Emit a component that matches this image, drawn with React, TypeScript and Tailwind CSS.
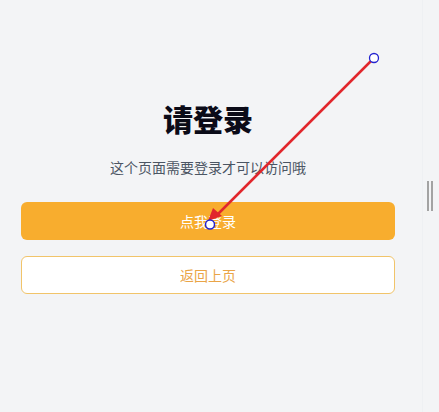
import React from "react";

export default function App() {
  return (
    <div
      className="relative flex min-h-[412px] w-full bg-[#f3f4f6]"
      style={{ fontFamily: '"Noto Sans CJK SC", "Noto Sans", sans-serif' }}
    >
      <div className="flex w-[422px] flex-col pl-[21px] pr-[27px] pt-[100px]">
        <h1 className="text-center text-[30px] font-black leading-[36px] text-[#0b0b18]">请登录</h1>
        <p className="mt-[21px] text-center text-[14px] leading-[20px] text-[#4b5563]">这个页面需要登录才可以访问哦</p>
        <button className="mt-[25px] h-[38px] w-full rounded-[6px] bg-[#f8ad2e] text-[14px] text-white">
          点我登录
        </button>
        <button className="mt-[16px] h-[38px] w-full rounded-[6px] border border-[#f1c46a] bg-white text-[14px] text-[#eaa547]">
          返回上页
        </button>
      </div>
      <div className="flex flex-1 gap-[2px] border-l border-[#eef0f3] pl-[4px] pt-[181px]">
        <div className="h-[30px] w-[2px] bg-[#a3a3a3]" />
        <div className="h-[30px] w-[2px] bg-[#a3a3a3]" />
      </div>
      <svg className="pointer-events-none absolute left-0 top-0" width="439" height="412">
        <line x1="374" y1="58" x2="216" y2="216" stroke="#e1262c" strokeWidth="2.5" />
        <polygon points="208,221 213,208 222,216" fill="#e1262c" />
        <circle cx="374" cy="58" r="4.5" fill="white" stroke="#2323d0" strokeWidth="1.3" />
        <circle cx="210" cy="224.5" r="4.5" fill="white" stroke="#2323d0" strokeWidth="1.5" />
      </svg>
    </div>
  );
}
